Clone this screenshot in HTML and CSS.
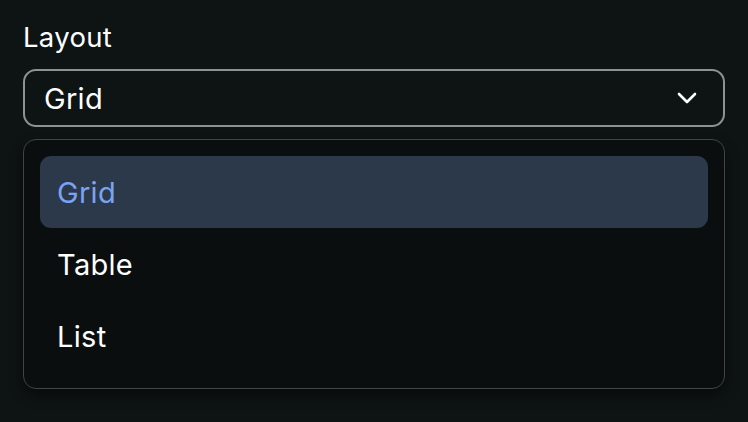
FILE: index.html
```html
<!DOCTYPE html>
<html>
<head>
<meta charset="utf-8">
<link rel="stylesheet" href="styles.css">
</head>
<body>
<div class="field">
  <label class="label">Layout</label>
  <div class="select">
    <span class="value">Grid</span>
    <svg class="chevron" width="20" height="12" viewBox="0 0 20 12"><path d="M2 2 L10 10 L18 2" fill="none" stroke="#ffffff" stroke-width="2.6" stroke-linecap="round" stroke-linejoin="round"/></svg>
  </div>
  <ul class="menu">
    <li class="option selected">Grid</li>
    <li class="option">Table</li>
    <li class="option">List</li>
  </ul>
</div>
</body>
</html>
```
FILE: styles.css
```css
html, body {
  margin: 0;
  background: #0e1314;
  height: 100%;
}
body {
  font-family: Inter, "Noto Sans", sans-serif;
  color: #ffffff;
  padding: 20px 23px 0 23px;
  box-sizing: border-box;
}
.field {
  display: flex;
  flex-direction: column;
}
.label {
  font-size: 27.5px;
  line-height: 34px;
  margin-bottom: 15px;
  letter-spacing: 0.3px;
}
.select {
  height: 58px;
  box-sizing: border-box;
  border: 2px solid #8a9492;
  border-radius: 13px;
  display: flex;
  align-items: center;
  justify-content: space-between;
  padding: 0 26px 0 19px;
  font-size: 29px;
  letter-spacing: 0.3px;
}
.chevron {
  display: block;
}
.menu {
  list-style: none;
  margin: 12px 0 0 0;
  padding: 16px;
  border: 1.5px solid #3d4644;
  border-radius: 13px;
  background: #0a0e0f;
  box-shadow: 0 6px 14px rgba(0,0,0,0.45);
  display: flex;
  flex-direction: column;
}
.option {
  height: 72px;
  display: flex;
  align-items: center;
  padding: 0 17px;
  font-size: 29px;
  letter-spacing: 0.3px;
  border-radius: 11px;
}
.option.selected {
  background: #2c394a;
  color: #7aa4f2;
}
```
